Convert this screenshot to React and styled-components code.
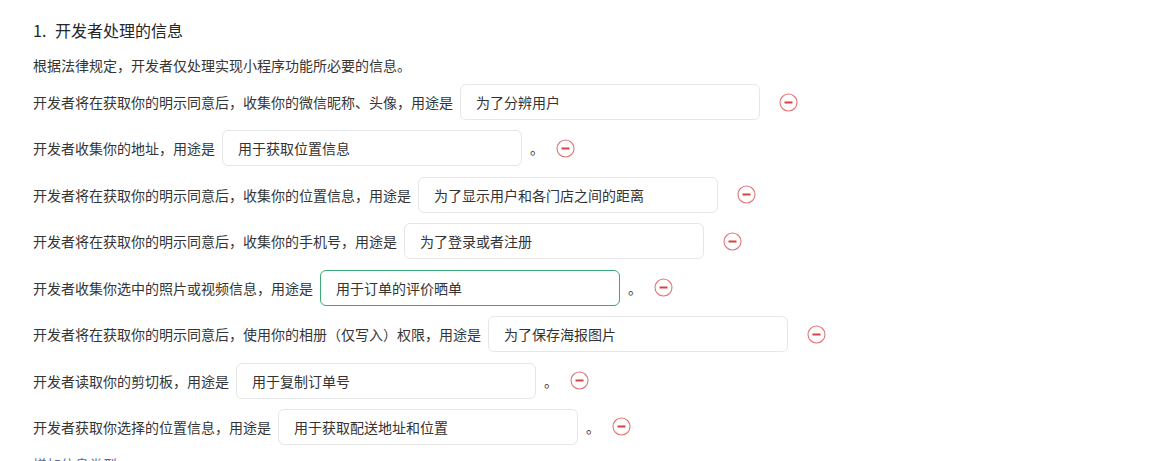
import React from "react";
import styled, { createGlobalStyle } from "styled-components";

const GlobalStyle = createGlobalStyle`
  html, body {
    margin: 0;
    padding: 0;
    background: #ffffff;
  }
  body {
    font-family: "Noto Sans CJK SC", "Noto Sans", sans-serif;
    color: #353535;
  }
`;

const Page = styled.div`
  padding: 18px 0 0 33px;
  height: 461px;
  box-sizing: border-box;
  overflow: hidden;
`;

const Title = styled.h2`
  margin: 0;
  font-size: 16px;
  line-height: 24px;
  font-weight: 400;
  color: #262626;
  display: flex;
`;

const TitleNum = styled.span`
  width: 22px;
`;

const Intro = styled.p`
  margin: 13px 0 9px;
  font-size: 14px;
  line-height: 20px;
  color: #353535;
`;

const List = styled.div`
  display: flex;
  flex-direction: column;
  gap: 10.43px;
`;

const Row = styled.div`
  display: flex;
  align-items: center;
  height: 36px;
  font-size: 14px;
  color: #353535;
`;

const Label = styled.span`
  white-space: nowrap;
  line-height: 20px;
`;

const Field = styled.div`
  margin-left: 7px;
  width: 300px;
  height: 36px;
  box-sizing: border-box;
  border: 1px solid ${(p) => (p.$active ? "#3ca875" : "#e6e6e6")};
  border-radius: 6px;
  padding: 0 15px;
  display: flex;
  align-items: center;
  font-size: 14px;
  color: #333333;
  background: #ffffff;
`;

const Period = styled.span`
  margin-left: 8px;
  width: 14px;
  line-height: 20px;
`;

const RemoveButton = styled.button`
  margin-left: ${(p) => (p.$afterPeriod ? "12px" : "19px")};
  width: 19px;
  height: 19px;
  padding: 0;
  border: none;
  background: transparent;
  display: flex;
  align-items: center;
  justify-content: center;
  cursor: pointer;
`;

const AddLink = styled.div`
  margin-top: 9px;
  font-size: 14px;
  line-height: 20px;
  color: #576b95;
`;

const MinusIcon = () => (
  <svg width="19" height="19" viewBox="0 0 19 19">
    <circle cx="9.5" cy="9.5" r="8.5" fill="none" stroke="#e27474" strokeWidth="1.1" />
    <line x1="5.5" y1="9.5" x2="13.5" y2="9.5" stroke="#d9403f" strokeWidth="2" />
  </svg>
);

const items = [
  { label: "开发者将在获取你的明示同意后，收集你的微信昵称、头像，用途是", value: "为了分辨用户", period: false },
  { label: "开发者收集你的地址，用途是", value: "用于获取位置信息", period: true },
  { label: "开发者将在获取你的明示同意后，收集你的位置信息，用途是", value: "为了显示用户和各门店之间的距离", period: false },
  { label: "开发者将在获取你的明示同意后，收集你的手机号，用途是", value: "为了登录或者注册", period: false },
  { label: "开发者收集你选中的照片或视频信息，用途是", value: "用于订单的评价晒单", period: true, active: true },
  { label: "开发者将在获取你的明示同意后，使用你的相册（仅写入）权限，用途是", value: "为了保存海报图片", period: false },
  { label: "开发者读取你的剪切板，用途是", value: "用于复制订单号", period: true },
  { label: "开发者获取你选择的位置信息，用途是", value: "用于获取配送地址和位置", period: true },
];

export default function App() {
  return (
    <>
      <GlobalStyle />
      <Page>
        <Title>
          <TitleNum>1.</TitleNum>
          <span>开发者处理的信息</span>
        </Title>
        <Intro>根据法律规定，开发者仅处理实现小程序功能所必要的信息。</Intro>
        <List>
          {items.map((it) => (
            <Row key={it.label}>
              <Label>{it.label}</Label>
              <Field $active={it.active}>{it.value}</Field>
              {it.period && <Period>。</Period>}
              <RemoveButton $afterPeriod={it.period} aria-label="删除">
                <MinusIcon />
              </RemoveButton>
            </Row>
          ))}
        </List>
        <AddLink>增加信息类型</AddLink>
      </Page>
    </>
  );
}
